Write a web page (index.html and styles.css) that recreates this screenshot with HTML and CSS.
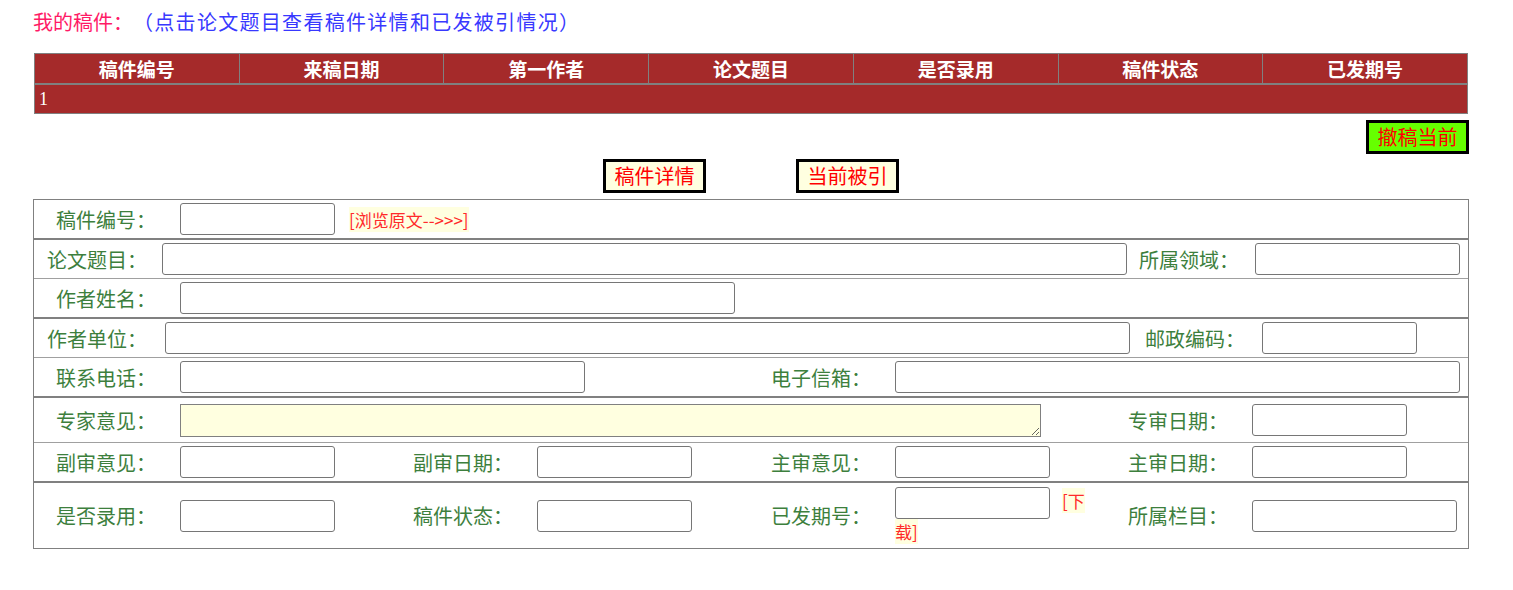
FILE: index.html
```html
<!DOCTYPE html>
<html lang="zh-CN">
<head>
  <meta charset="UTF-8">
  <meta name="viewport" content="width=device-width, initial-scale=1.0">
  <title>我的稿件</title>
  <link rel="stylesheet" href="styles.css">
</head>
<body>
<div class="page">

  <h2 class="pageTitle"><span class="tRed">我的稿件：</span><span class="tBlue">（点击论文题目查看稿件详情和已发被引情况）</span></h2>

  <table class="gjList">
    <tr>
      <th>稿件编号</th>
      <th>来稿日期</th>
      <th>第一作者</th>
      <th>论文题目</th>
      <th>是否录用</th>
      <th>稿件状态</th>
      <th>已发期号</th>
    </tr>
    <tr>
      <td colspan="7">1</td>
    </tr>
  </table>

  <div class="opBar">
    <button class="btn btnGreen">撤稿当前</button>
  </div>
  <div class="tabBar">
    <button class="btn">稿件详情</button>
    <button class="btn">当前被引</button>
  </div>

  <div class="detail">
    <!-- 稿件编号 -->
    <div class="grp">
      <div class="row r1">
        <span class="lbl">稿件编号：</span>
        <input type="text" class="ipt">
        <a href="#" class="lnk lnkView">[浏览原文-->>>]</a>
      </div>
    </div>

    <!-- 论文 / 作者 -->
    <div class="grp">
      <div class="row r2">
        <span class="lbl">论文题目：</span>
        <input type="text" class="ipt ipt965">
        <span class="lbl lblR">所属领域：</span>
        <input type="text" class="ipt ipt205">
      </div>
      <div class="row r1 sep">
        <span class="lbl">作者姓名：</span>
        <input type="text" class="ipt ipt555">
      </div>
    </div>

    <!-- 单位 / 联系 -->
    <div class="grp">
      <div class="row r4">
        <span class="lbl">作者单位：</span>
        <input type="text" class="ipt ipt965">
        <span class="lbl lblR">邮政编码：</span>
        <input type="text" class="ipt">
      </div>
      <div class="row cols sep">
        <div class="cell span2">
          <span class="lbl">联系电话：</span>
          <input type="text" class="ipt ipt405">
        </div>
        <div class="cell span2">
          <span class="lbl">电子信箱：</span>
          <input type="text" class="ipt ipt565">
        </div>
      </div>
    </div>

    <!-- 审稿 -->
    <div class="grp">
      <div class="row cols rTall">
        <div class="cell span3">
          <span class="lbl">专家意见：</span>
          <textarea class="opinion"></textarea>
        </div>
        <div class="cell">
          <span class="lbl">专审日期：</span>
          <input type="text" class="ipt">
        </div>
      </div>
      <div class="row cols sep">
        <div class="cell">
          <span class="lbl">副审意见：</span>
          <input type="text" class="ipt">
        </div>
        <div class="cell">
          <span class="lbl">副审日期：</span>
          <input type="text" class="ipt">
        </div>
        <div class="cell">
          <span class="lbl">主审意见：</span>
          <input type="text" class="ipt">
        </div>
        <div class="cell">
          <span class="lbl">主审日期：</span>
          <input type="text" class="ipt">
        </div>
      </div>
    </div>

    <!-- 录用 / 刊期 -->
    <div class="grp">
      <div class="row cols rLast">
        <div class="cell">
          <span class="lbl">是否录用：</span>
          <input type="text" class="ipt">
        </div>
        <div class="cell">
          <span class="lbl">稿件状态：</span>
          <input type="text" class="ipt">
        </div>
        <div class="cell">
          <span class="lbl">已发期号：</span>
          <div class="pub"><input type="text" class="ipt"><a href="#" class="lnk lnkDown">[下载]</a></div>
        </div>
        <div class="cell">
          <span class="lbl">所属栏目：</span>
          <input type="text" class="ipt ipt205">
        </div>
      </div>
    </div>
  </div>

</div>
</body>
</html>
```

FILE: styles.css
```css
body {
  margin: 8px;
  font-family: "Noto Sans CJK SC", "Noto Sans", sans-serif;
  text-spacing-trim: space-all;
}
.page {
  width: 1436px;
  margin-left: 25px;
}
.pageTitle {
  margin: 0;
  font-size: 20px;
  font-weight: normal;
  line-height: 28px;
}
.tRed {
  color: #ff1a66;
}
.tBlue {
  color: #3838ff;
  letter-spacing: 1.3px;
}

/* 稿件列表 */
.gjList {
  width: 1434px;
  margin: 17px 1px 0;
  border-collapse: collapse;
  background: #a52a2a;
  color: #fff;
}
.gjList th {
  height: 29px;
  padding: 0;
  font-size: 19px;
  font-weight: bold;
  border: 1px solid #808080;
  border-bottom-width: 2px;
}
.gjList td {
  height: 28px;
  padding: 0 4px;
  font-family: "Liberation Serif", serif;
  font-size: 18px;
  border: 1px solid #808080;
}

/* 按钮 */
.opBar {
  display: flex;
  justify-content: flex-end;
  margin-top: 6px;
}
.tabBar {
  display: flex;
  justify-content: center;
  gap: 90px;
  margin-top: 5px;
}
.btn {
  width: 103px;
  height: 34px;
  box-sizing: border-box;
  padding: 0;
  border: 3px solid #000;
  background: #ffffe0;
  color: #f00;
  font-family: "Noto Sans CJK SC", sans-serif;
  font-size: 20px;
  line-height: 28px;
  cursor: pointer;
}
.btnGreen {
  background: #66ff00;
}

/* 详情表单 */
.detail {
  margin-top: 6px;
}
.grp {
  border: 1px solid #808080;
}
.row {
  display: flex;
  align-items: center;
  height: 38px;
  color: #3d7f3d;
  font-size: 20px;
}
.sep {
  border-top: 1px solid #a0a0a0;
}
.r1 {
  padding-left: 22px;
}
.r1 .lbl {
  width: 124px;
}
.r2, .r4 {
  padding-left: 13px;
}
.r2 .lbl {
  width: 115px;
}
.r4 .lbl {
  width: 118px;
}
.r2 .lblR {
  width: 116px;
  margin-left: 12px;
}
.r4 .lblR {
  width: 117px;
  margin-left: 15px;
}
.lbl {
  flex: none;
  white-space: nowrap;
}
.ipt {
  flex: none;
  width: 155px;
  height: 32px;
  box-sizing: border-box;
  padding: 0 4px;
  border: 1px solid #767676;
  border-radius: 3px;
  background: #fff;
}
.ipt205 { width: 205px; }
.ipt405 { width: 405px; }
.ipt555 { width: 555px; }
.ipt565 { width: 565px; }
.ipt965 { width: 965px; }

.cols {
  display: grid;
  grid-template-columns: 357px 358px 357px 1fr;
}
.cell {
  display: flex;
  align-items: center;
  padding-left: 22px;
}
.cell .lbl {
  width: 124px;
}
.span2 { grid-column: span 2; }
.span3 { grid-column: span 3; }
.rTall {
  height: 44px;
}
.rLast {
  height: 65px;
}
.opinion {
  width: 861px;
  height: 33px;
  box-sizing: border-box;
  margin: 0;
  border: 1px solid #808080;
  background: #ffffe0;
}

.lnk {
  background: #ffffe0;
  color: #ff2a2a;
  font-size: 17px;
  text-decoration: none;
}
.lnkView {
  margin-left: 14px;
}
.pub {
  width: 198px;
  line-height: 24px;
}
.pub .ipt {
  vertical-align: middle;
}
.lnkDown {
  margin-left: 12px;
}
```
